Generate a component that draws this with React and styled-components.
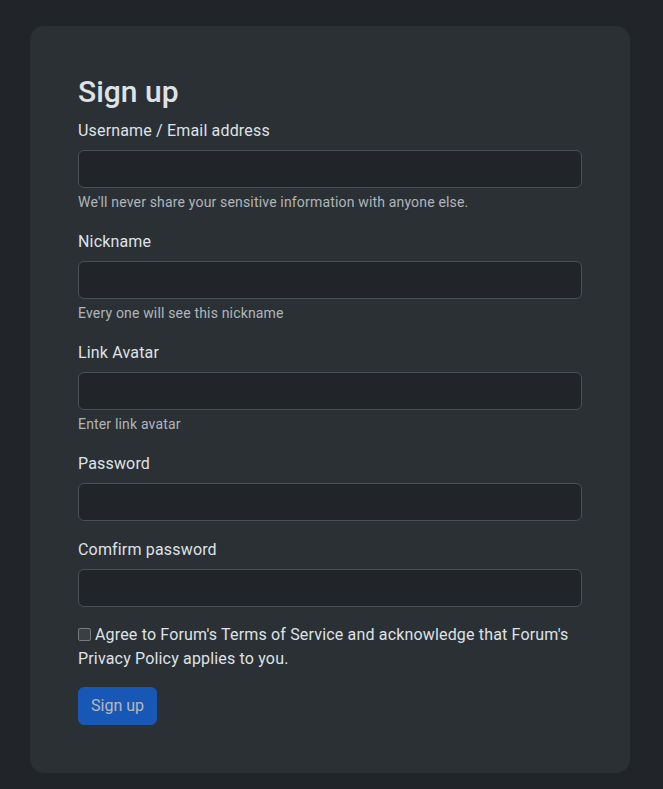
import React from 'react'
import styled, { createGlobalStyle } from 'styled-components'

const GlobalStyle = createGlobalStyle`
    html, body {
        margin: 0;
        padding: 0;
        background: #212529;
    }
    body {
        font-family: Roboto, "Liberation Sans", sans-serif;
        color: #dee2e6;
        font-size: 16px;
        line-height: 1.5;
        letter-spacing: 0.17px;
    }
    * {
        box-sizing: border-box;
    }
`;

const fields = [
    { label: 'Username / Email address', type: 'text', help: "We'll never share your sensitive information with anyone else." },
    { label: 'Nickname', type: 'text', help: 'Every one will see this nickname' },
    { label: 'Link Avatar', type: 'text', help: 'Enter link avatar' },
    { label: 'Password', type: 'password' },
    { label: 'Comfirm password', type: 'password' },
];

export default function App() {
    return (
        <Page>
            <GlobalStyle />
            <Card>
                <Title>Sign up</Title>
                <form onSubmit={(e) => e.preventDefault()}>
                    {fields.map((f) => (
                        <Group key={f.label}>
                            <Label>{f.label}</Label>
                            <Input type={f.type} />
                            {f.help && <Help>{f.help}</Help>}
                        </Group>
                    ))}
                    <Group>
                        <CheckLabel>
                            <Check type="checkbox" />
                            Agree to Forum's Terms of Service and acknowledge that Forum's Privacy Policy applies to you.
                        </CheckLabel>
                    </Group>
                    <Submit type="submit" disabled>Sign up</Submit>
                </form>
            </Card>
        </Page>
    )
}

const Page = styled.div`
    padding: 26px 0 16px 30px;
`;

const Card = styled.div`
    width: 600px;
    background: #2b3035;
    border-radius: 14px;
    padding: 48px;
`;

const Title = styled.h1`
    margin: 0 0 8px;
    font-size: 30px;
    line-height: 36px;
    font-weight: 500;
    letter-spacing: 0;
    color: #dee2e6;
`;

const Group = styled.div`
    margin-bottom: 16px;
`;

const Label = styled.label`
    display: block;
    margin-bottom: 8px;
    padding-top: 1px;
    line-height: 23px;
`;

const Input = styled.input`
    display: block;
    width: 100%;
    height: 38px;
    padding: 6px 12px;
    font: inherit;
    color: #dee2e6;
    background: #212529;
    border: 1px solid #495057;
    border-radius: 6px;
    outline: none;
`;

const Help = styled.div`
    margin-top: 4px;
    font-size: 14px;
    line-height: 21px;
    color: rgba(222, 226, 230, 0.75);
`;

const CheckLabel = styled.label`
    display: block;
    line-height: 24px;
`;

const Check = styled.input`
    appearance: none;
    width: 13px;
    height: 13px;
    margin: 0 4px 0 0;
    vertical-align: -1px;
    background: #3a3f44;
    border: 1px solid #767b80;
    border-radius: 2px;
`;

const Submit = styled.button`
    display: block;
    height: 38px;
    padding: 6px 12px;
    font: inherit;
    color: #fff;
    background: #0d6efd;
    border: 1px solid #0d6efd;
    border-radius: 6px;
    opacity: 0.65;
`;
